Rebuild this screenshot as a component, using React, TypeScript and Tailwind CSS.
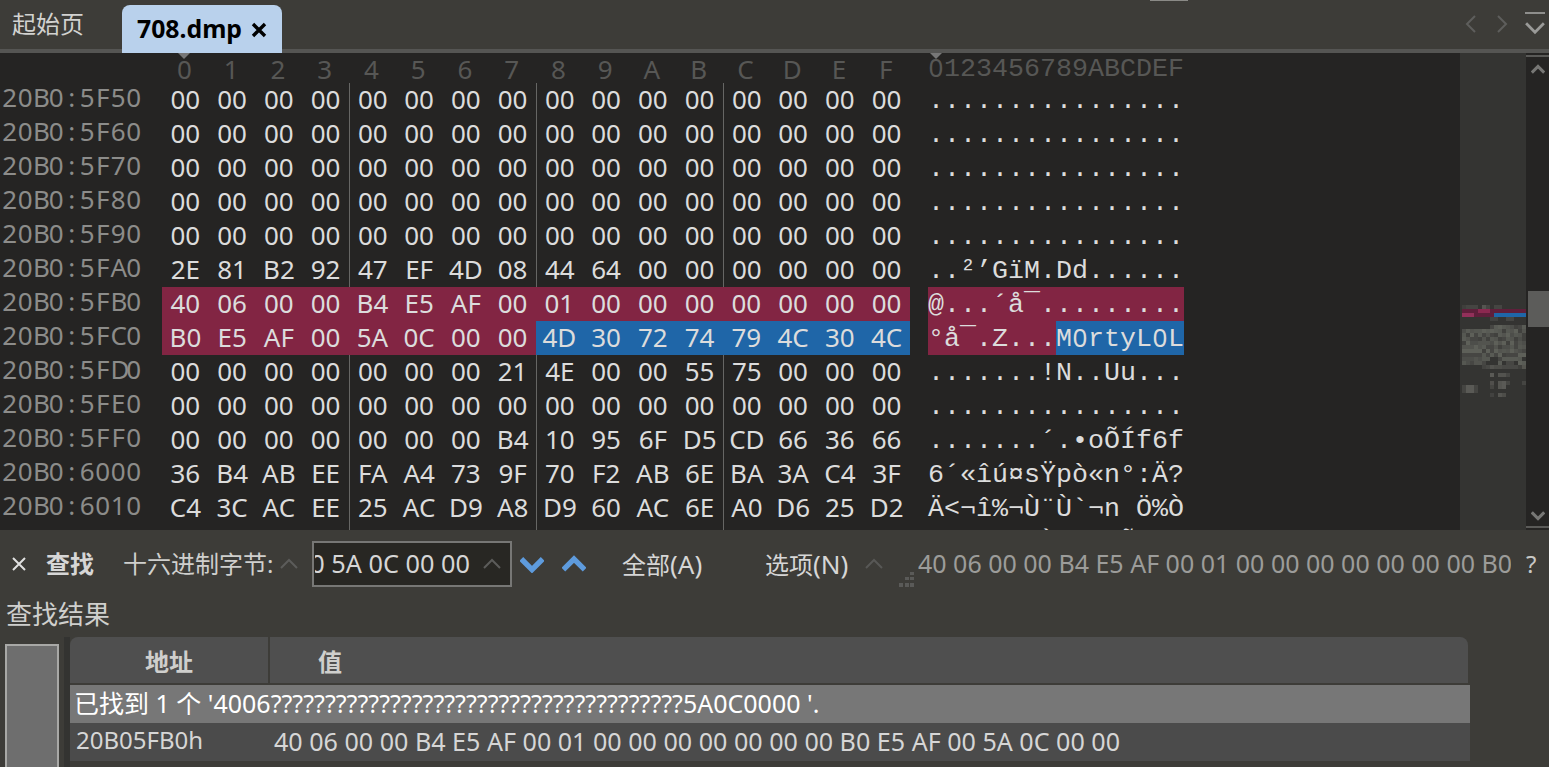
const uiFont = "[font-family:'Noto_Sans','Noto_Sans_CJK_SC',sans-serif]";
const monoFont = "[font-family:'Liberation_Mono',monospace]";

type Row = { addr: string; hex: string; ascii: string; tint?: "red" | "split" };

const zeros = "00 00 00 00 00 00 00 00 00 00 00 00 00 00 00 00";
const dots = "................";

const rows: Row[] = [
  { addr: "20B0:5F50", hex: zeros, ascii: dots },
  { addr: "20B0:5F60", hex: zeros, ascii: dots },
  { addr: "20B0:5F70", hex: zeros, ascii: dots },
  { addr: "20B0:5F80", hex: zeros, ascii: dots },
  { addr: "20B0:5F90", hex: zeros, ascii: dots },
  { addr: "20B0:5FA0", hex: "2E 81 B2 92 47 EF 4D 08 44 64 00 00 00 00 00 00", ascii: "..²’GïM.Dd......" },
  { addr: "20B0:5FB0", hex: "40 06 00 00 B4 E5 AF 00 01 00 00 00 00 00 00 00", ascii: "@...´å¯.........", tint: "red" },
  { addr: "20B0:5FC0", hex: "B0 E5 AF 00 5A 0C 00 00 4D 30 72 74 79 4C 30 4C", ascii: "°å¯.Z...M0rtyL0L", tint: "split" },
  { addr: "20B0:5FD0", hex: "00 00 00 00 00 00 00 21 4E 00 00 55 75 00 00 00", ascii: ".......!N..Uu..." },
  { addr: "20B0:5FE0", hex: zeros, ascii: dots },
  { addr: "20B0:5FF0", hex: "00 00 00 00 00 00 00 B4 10 95 6F D5 CD 66 36 66", ascii: ".......´.•oÕÍf6f" },
  { addr: "20B0:6000", hex: "36 B4 AB EE FA A4 73 9F 70 F2 AB 6E BA 3A C4 3F", ascii: "6´«îú¤sŸpò«n°:Ä?" },
  { addr: "20B0:6010", hex: "C4 3C AC EE 25 AC D9 A8 D9 60 AC 6E A0 D6 25 D2", ascii: "Ä<¬î%¬Ù¨Ù`¬n Ö%Ò" },
  { addr: "20B0:6020", hex: "", ascii: "       À    Õ   " },
];

const hexHeader = "0123456789ABCDEF".split("");

function Chevron({ dir, color, width = 18, stroke = 2 }: { dir: "up" | "down" | "left" | "right"; color: string; width?: number; stroke?: number }) {
  const d = {
    up: "M1 11 L9 3 L17 11",
    down: "M1 3 L9 11 L17 3",
    left: "M12 1 L4 9 L12 17",
    right: "M4 1 L12 9 L4 17",
  }[dir];
  const box = dir === "up" || dir === "down" ? "0 0 18 14" : "0 0 16 18";
  return (
    <svg viewBox={box} width={width} fill="none" stroke={color} strokeWidth={stroke}>
      <path d={d} />
    </svg>
  );
}

function Minimap() {
  const cells: { x: number; y: number; c: string }[] = [];
  // noise block of the map: ten rows of data bytes
  const tones = ["#464643", "#53544f", "#595b55", "#4d4e4a", "#5e6059", "#41413e", "#565852"];
  for (let r = 0; r < 10; r++) {
    for (let c = 0; c < 16; c++) {
      const h = (r * 31 + c * 17 + ((r * c * 7) ^ (c * 13))) % 7;
      if (r === 0 && c < 7) continue;
      if (r > 7 && c > 4 && h % 2 === 1) continue;
      cells.push({ x: c * 4, y: 20 + r * 4, c: tones[h] });
    }
  }
  const extra: [number, number, string][] = [
    [0, 0, "#3f3f3c"], [1, 0, "#454542"], [2, 0, "#454542"], [3, 0, "#454542"], [5, 0, "#555551"], [6, 0, "#454542"], [8, 0, "#454542"], [9, 0, "#454542"],
    [7, 12, "#424240"], [8, 12, "#424240"], [11, 12, "#464643"], [12, 12, "#464643"],
    [5, 60, "#434340"], [6, 60, "#484845"], [7, 60, "#53534f"], [8, 60, "#4d4d49"], [9, 60, "#4d4d49"], [10, 60, "#484845"], [11, 60, "#484845"], [12, 60, "#484845"], [13, 60, "#484845"], [14, 60, "#3f3f3c"], [15, 60, "#55554f"],
    [7, 68, "#5a5a56"], [9, 68, "#53534f"], [10, 68, "#53534f"], [11, 68, "#464643"],
    [7, 76, "#504f4c"], [9, 76, "#555551"], [10, 76, "#5a5a56"], [11, 76, "#464643"], [15, 76, "#454542"],
    [7, 80, "#454542"], [9, 80, "#555551"], [10, 80, "#5a5a56"],
    [0, 80, "#454542"], [1, 80, "#5a5a56"], [2, 80, "#5a5a56"], [3, 80, "#454542"],
    [0, 84, "#454542"], [1, 84, "#5a5a56"], [2, 84, "#5a5a56"], [3, 84, "#454542"],
    [7, 88, "#424240"], [9, 88, "#555551"], [10, 88, "#4d4d49"],
    [7, 240, "#666662"], [9, 240, "#5a5a56"], [10, 240, "#4d4d49"],
  ];
  for (const [x, y, c] of extra) cells.push({ x: x * 4, y, c });

  return (
    <div className="w-[66px] shrink-0 bg-[#343432] overflow-hidden">
      <svg width="66" height="477" className="block">
        <g transform="translate(2 252)">
          {cells.map((p, i) => (
            <rect key={i} x={p.x} y={p.y} width="4" height="4" fill={p.c} />
          ))}
          <rect x="0" y="4" width="64" height="4" fill="#5f1f3b" />
          <rect x="16" y="4" width="12" height="4" fill="#8c2850" />
          <rect x="0" y="8" width="32" height="4" fill="#5f1f3b" />
          <rect x="0" y="8" width="12" height="4" fill="#92305a" />
          <rect x="32" y="8" width="32" height="4" fill="#1f66a8" />
        </g>
      </svg>
    </div>
  );
}

// address column keeps a fixed pitch, the proportional digits sit in their own cells
function Addr({ text }: { text: string }) {
  return (
    <div className={`flex w-[162px] shrink-0 pl-[2px] leading-[28px] text-[#8c8c8a] text-[26px] ${uiFont}`}>
      {text.split("").map((ch, i) => (
        <span key={i} className="w-[15.5px] shrink-0 text-center">{ch}</span>
      ))}
    </div>
  );
}

function HexRow({ row }: { row: Row }) {
  const bytes = row.hex ? row.hex.split(" ") : hexHeader.map(() => "");
  const bg = row.tint ? "bg-[#822543]" : "";
  return (
    <div className="flex h-[34px] shrink-0">
      <Addr text={row.addr} />
      <div className={`grid w-[748px] shrink-0 grid-cols-16 text-[26px] leading-[33px] ${uiFont} ${bg}`}>
        {bytes.map((b, i) => {
          const blue = row.tint === "split" && i >= 8;
          const sep = !row.tint && i > 0 && i % 4 === 0;
          return (
            <div
              key={i}
              className={`text-center whitespace-nowrap text-[#dcdcdc] ${blue ? "bg-[#1f66a8]" : ""} ${sep ? "border-l border-[#666664]" : ""}`}
            >
              {b}
            </div>
          );
        })}
      </div>
      <div className={`ml-[18px] flex w-[256px] shrink-0 ${bg}`}>
        {row.ascii.split("").map((ch, i) => (
          <div key={i} className={`w-4 shrink-0 pt-[2px] leading-[32px] text-center text-[#dcdcdc] ${row.tint === "split" && i >= 8 ? "bg-[#1f66a8]" : ""}`}>
            <span className={ch === "0" ? `relative -top-[2px] text-[26px] ${uiFont}` : ""}>{ch === " " ? "\u00a0" : ch}</span>
          </div>
        ))}
      </div>
    </div>
  );
}

export default function App() {
  return (
    <div className={`relative h-[767px] w-[1549px] overflow-hidden bg-[#3d3c38] text-[24px] text-[#d6d6d6] ${uiFont}`}>
      <div className="absolute left-[1150px] top-0 h-px w-[38px] bg-[#8a8a86]" />

      {/* tab strip */}
      <div className="flex h-[53px] items-end border-b-4 border-[#555553]">
        <div className="flex h-[49px] w-[122px] items-center pl-[12px] pb-[1px] text-[#d2d2d0]">起始页</div>
        <div className="relative -mb-1 flex h-[48px] w-[160px] items-center rounded-t-lg bg-[#b9d1ec] pl-[15px] pb-[1px] text-[24.8px] font-bold text-black">
          708.dmp
          <svg viewBox="0 0 16 16" width="16" className="ml-[9px] mt-[3px]" stroke="#000" strokeWidth="3.4" fill="none">
            <path d="M2 2 L14 14 M14 2 L2 14" />
          </svg>
        </div>
        <div className="ml-auto flex h-[49px] items-center gap-[15px] pr-[4px] pb-[2px]">
          <div className="flex gap-[15px] pl-[1px]">
            <Chevron dir="left" color="#5e5e5c" width={16} />
            <Chevron dir="right" color="#5e5e5c" width={16} />
          </div>
          <div className="flex flex-col items-center">
            <div className="h-[2px] w-[20px] bg-[#8e8e8c]" />
            <div className="mt-[6px]">
              <Chevron dir="down" color="#9a9a98" width={20} stroke={2.5} />
            </div>
          </div>
        </div>
      </div>

      {/* hex editor */}
      <div className={`flex h-[477px] overflow-hidden bg-[#252423] text-[26.67px] ${monoFont}`}>
        <div className="relative w-[1460px] shrink-0">
          <svg viewBox="0 0 12 6" width="12" height="6" className="absolute left-[178px] top-0" fill="#777">
            <path d="M0 0 H12 L6 6 Z" />
          </svg>
          <svg viewBox="0 0 12 6" width="12" height="6" className="absolute left-[930px] top-0" fill="#777">
            <path d="M0 0 H12 L6 6 Z" />
          </svg>
          <div className="flex h-[30px] text-[#575755]">
            <div className={`ml-[161px] grid w-[748px] shrink-0 grid-cols-16 pt-[2px] text-[26px] leading-[28px] ${uiFont}`}>
              {hexHeader.map((h) => (
                <div key={h} className="text-center">{h}</div>
              ))}
            </div>
            <div className="ml-[19px] flex w-[256px] shrink-0 pt-[2px] leading-[28px]">
              {hexHeader.map((h) => (
                <div key={h} className="w-4 shrink-0 text-center">
                  <span className={h === "0" ? `relative -top-[2px] text-[26px] ${uiFont}` : ""}>{h}</span>
                </div>
              ))}
            </div>
          </div>
          {rows.map((r) => (
            <HexRow key={r.addr} row={r} />
          ))}
        </div>
        <Minimap />
        <div className="relative flex w-[23px] shrink-0 flex-col items-center justify-between py-[2px]">
          <div className="flex w-full flex-col items-center gap-[7px]">
            <div className="h-[2px] w-full bg-[#5a5a58]" />
            <Chevron dir="up" color="#777775" width={14} stroke={4} />
          </div>
          <div className="absolute right-0 top-[238px] h-[36px] w-[21px] bg-[#5c5c5a]" />
          <div className="flex w-full flex-col items-center gap-[5px]">
            <Chevron dir="down" color="#777775" width={14} stroke={4} />
            <div className="h-[2px] w-full bg-[#5a5a58]" />
          </div>
        </div>
      </div>

      {/* find bar */}
      <div className="flex h-[70px] items-center whitespace-nowrap pb-[2px]">
        <div className="flex w-[37px] shrink-0 justify-center">
          <svg viewBox="0 0 16 16" width="16" stroke="#e0e0e0" strokeWidth="2" fill="none">
            <path d="M2 2 L14 14 M14 2 L2 14" />
          </svg>
        </div>
        <div className="w-[86px] shrink-0 pl-[9px] font-bold">查找</div>
        <div className="w-[153px] shrink-0 text-[#cfcfcd]">十六进制字节:</div>
        <div className="flex w-[36px] shrink-0 justify-start pl-[4px]">
          <Chevron dir="up" color="#5c5c5a" width={18} />
        </div>
        <div className="flex h-[46px] w-[200px] shrink-0 items-center border-2 border-[#777775] bg-[#282723] pl-[1px]">
          <div className="flex w-[155px] justify-end overflow-hidden">
            <span className="shrink-0 text-[25.3px]">40 06 00 00 B4 E5 AF 00 01 00 00 00 00 00 00 00 B0 E5 AF 00 5A 0C 00 00</span>
          </div>
          <div className="ml-[13px]">
            <Chevron dir="up" color="#5c5c5a" width={18} />
          </div>
        </div>
        <div className="flex w-[40px] shrink-0 justify-center">
          <Chevron dir="down" color="#5e9bdd" width={24} stroke={4} />
        </div>
        <div className="flex w-[44px] shrink-0 justify-center">
          <Chevron dir="up" color="#5e9bdd" width={24} stroke={4} />
        </div>
        <div className="w-[143px] shrink-0 pl-[26px]">全部<span className="text-[26px]">(A)</span></div>
        <div className="w-[121px] shrink-0 pl-[26px]">选项<span className="text-[26px]">(N)</span></div>
        <div className="flex w-[28px] shrink-0 justify-center">
          <Chevron dir="up" color="#585856" width={18} />
        </div>
        <div className="w-[30px] shrink-0 self-start pt-[42px] pl-[11px]">
          <svg width="16" height="16" fill="#5a5a58">
            <rect x="11" y="0" width="4" height="3" />
            <rect x="6" y="5" width="4" height="3" />
            <rect x="11" y="5" width="4" height="3" />
            <rect x="0" y="11" width="4" height="4" />
            <rect x="6" y="11" width="4" height="4" />
            <rect x="11" y="11" width="4" height="4" />
          </svg>
        </div>
        <div className="w-[593px] shrink-0 overflow-hidden text-[25px] text-[#9c9c9a]">
          40 06 00 00 B4 E5 AF 00 01 00 00 00 00 00 00 00 B0
        </div>
        <div className="ml-[15px] text-[#c8c8c6]">?</div>
      </div>

      {/* results */}
      <div className="flex h-[37px] items-start pl-[6px] text-[26px] leading-[28px] text-[#cfcfcd]">查找结果</div>
      <div className="flex h-[130px]">
        <div className="ml-[5px] mt-[7px] w-[54px] shrink-0 border-x-2 border-t-2 border-[#a8a8a6] bg-[#6e6e6e]" />
        <div className="ml-[5px] w-[6px] shrink-0 bg-[#333331]" />
        <div className="w-[1400px] shrink-0">
          <div className="flex h-[46px] w-[1398px] rounded-t-lg bg-[#4f4f4f] font-bold text-[#cfcfcd]">
            <div className="flex w-[198px] shrink-0 items-center justify-center pt-[3px]">地址</div>
            <div className="flex flex-1 items-center border-l-2 border-[#3d3c38] pl-[48px] pt-[3px]">值</div>
          </div>
          <div className="mt-[2px] flex h-[38px] items-center whitespace-nowrap bg-[#777777] pl-[4px] text-[25px] text-white">
            已找到 1 个 '4006??????????????????????????????????????5A0C0000 '.
          </div>
          <div className="flex h-[38px] items-center whitespace-nowrap bg-[#4b4b4b] pl-[6px] text-[25.1px]">
            <span className="w-[198px] shrink-0 -mt-[4px] text-[24px]">20B05FB0h</span>
            40 06 00 00 B4 E5 AF 00 01 00 00 00 00 00 00 00 B0 E5 AF 00 5A 0C 00 00
          </div>
        </div>
      </div>
    </div>
  );
}
